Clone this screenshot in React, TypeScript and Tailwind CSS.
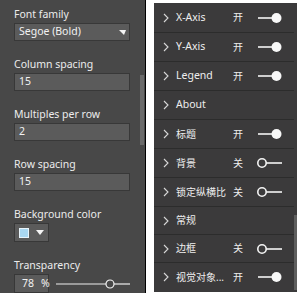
import React from "react";

const font = { fontFamily: '"Noto Sans", "Noto Sans CJK SC", sans-serif' };

function Label({ children }: { children: React.ReactNode }) {
  return <div className="h-[14px] leading-[14px] text-[10.5px] text-[#ececec] mb-[2px]">{children}</div>;
}

function Box({ children, w = "w-[116px]" }: { children?: React.ReactNode; w?: string }) {
  return (
    <div className={`${w} h-[18px] bg-[#5b5b5b] border border-[#383838] flex items-center pl-[4px] text-[10.5px] text-[#f2f2f2]`}>
      {children}
    </div>
  );
}

function Toggle({ on }: { on: boolean }) {
  return on ? (
    <svg width="26" height="12" viewBox="0 0 26 12">
      <line x1="1" y1="6" x2="18" y2="6" stroke="#f4f4f4" strokeWidth="1.6" />
      <circle cx="19.5" cy="6" r="5" fill="#f8f8f8" />
    </svg>
  ) : (
    <svg width="26" height="12" viewBox="0 0 26 12">
      <circle cx="5" cy="6" r="4.2" fill="none" stroke="#f4f4f4" strokeWidth="1.6" />
      <line x1="9.2" y1="6" x2="25" y2="6" stroke="#f4f4f4" strokeWidth="1.6" />
    </svg>
  );
}

function Chevron() {
  return (
    <svg width="6" height="10" viewBox="0 0 6 10" className="shrink-0">
      <polyline points="1,1 5,5 1,9" fill="none" stroke="#d8d8d8" strokeWidth="1.1" />
    </svg>
  );
}

function RowBody({ label, state, cjk }: { label: string; state?: "on" | "off"; cjk?: boolean }) {
  return (
    <>
      <Chevron />
      <div className={`ml-[7px] w-[57px] ${cjk ? "text-[10px]" : "text-[10.5px]"} text-[#eeeeee] whitespace-nowrap`}>{label}</div>
      {state && (
        <>
          <div className="w-[24px] text-[10px] text-[#eeeeee]">{state === "on" ? "开" : "关"}</div>
          <Toggle on={state === "on"} />
        </>
      )}
    </>
  );
}

function Row({ label, state, h = "h-[29px]", cjk }: { label: string; state?: "on" | "off"; h?: string; cjk?: boolean }) {
  return (
    <div className={`${h} border-b border-[#2c2c2c] flex items-center pl-[9px]`}>
      <RowBody label={label} state={state} cjk={cjk} />
    </div>
  );
}

export default function App() {
  return (
    <div className="w-[304px] h-[298px] bg-white flex items-start" style={font}>
      {/* Left panel */}
      <div className="w-[146px] h-[293px] bg-[#484848] border-r border-black flex">
        <div className="w-[140px] pl-[14px] pt-[7px] flex flex-col gap-[16px]">
          <div>
            <Label>Font family</Label>
            <div className="w-[116px] h-[18px] bg-[#5b5b5b] border border-[#383838] flex items-center justify-between pl-[4px] pr-[3px] text-[10.5px] text-[#f2f2f2]">
              <span>Segoe (Bold)</span>
              <svg width="7" height="5" viewBox="0 0 7 5">
                <polygon points="0,0 7,0 5,5" fill="#f4f4f4" />
              </svg>
            </div>
          </div>
          <div>
            <Label>Column spacing</Label>
            <Box>15</Box>
          </div>
          <div>
            <Label>Multiples per row</Label>
            <Box>2</Box>
          </div>
          <div>
            <Label>Row spacing</Label>
            <Box>15</Box>
          </div>
          <div>
            <Label>Background color</Label>
            <div className="w-[35px] h-[19px] bg-[#5b5b5b] border border-[#383838] flex items-center pl-[4px] gap-[7px]">
              <div className="w-[10px] h-[10px] bg-[#a9d8f2] border border-[#e8f4fb]" />
              <svg width="8" height="5" viewBox="0 0 8 5">
                <polygon points="0,0 8,0 4,5" fill="#f4f4f4" />
              </svg>
            </div>
          </div>
          <div>
            <Label>Transparency</Label>
            <div className="flex items-center">
              <div className="w-[35px] h-[19px] bg-[#5b5b5b] border border-[#383838] flex items-center pl-[7px] gap-[7px] text-[10.5px] text-[#f2f2f2]">
                <span>78</span>
                <span>%</span>
              </div>
              <svg width="76" height="10" viewBox="0 0 76 10" className="ml-[7px]">
                <line x1="0" y1="5" x2="50" y2="5" stroke="#eeeeee" strokeWidth="1.2" />
                <circle cx="54" cy="5" r="4" fill="none" stroke="#f4f4f4" strokeWidth="1.2" />
                <line x1="58" y1="5" x2="74" y2="5" stroke="#eeeeee" strokeWidth="1.2" />
              </svg>
            </div>
          </div>
        </div>
        <div className="w-[5px]">
          <div className="mt-[75px] h-[70px] w-[4px] bg-[#6a6a6a]" />
        </div>
      </div>

      {/* Right panel */}
      <div className="ml-[8px] mt-[3px] w-[143px] h-[289px] bg-[#3b3a3b] flex">
        <div className="w-[140px] flex flex-col">
          <Row label="X-Axis" state="on" h="h-[30px]" />
          <Row label="Y-Axis" state="on" />
          <Row label="Legend" state="on" />
          <Row label="About" />
          <Row label="标题" state="on" cjk />
          <Row label="背景" state="off" cjk />
          <Row label="锁定纵横比" state="off" cjk />
          <Row label="常规" h="h-[28px]" cjk />
          <Row label="边框" state="off" h="h-[28px]" cjk />
          <div className="h-[28px] flex items-center pl-[9px]">
            <RowBody label="视觉对象..." state="on" cjk />
          </div>
        </div>
        <div className="w-[3px]">
          <div className="mt-[212px] h-[75px] w-[3px] bg-[#5e5e5e]" />
        </div>
      </div>
    </div>
  );
}
